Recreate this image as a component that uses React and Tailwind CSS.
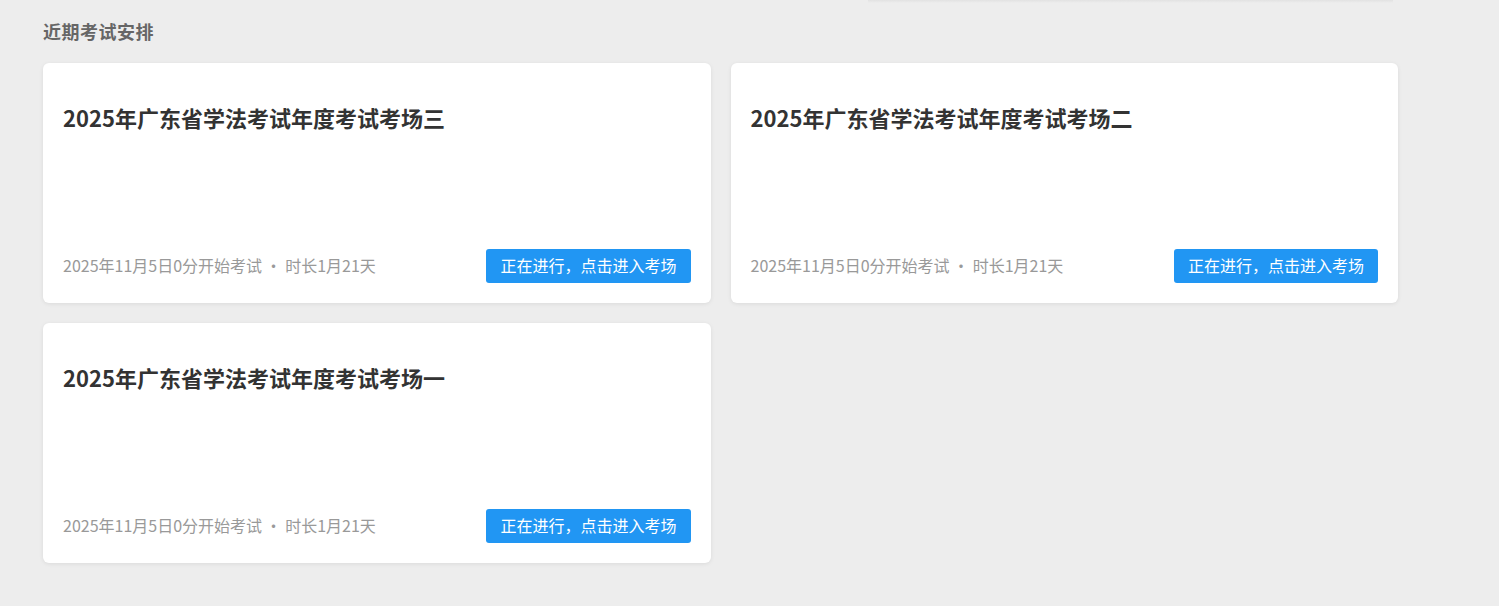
import React from "react";

const exams = [
  { id: 3, title: "2025年广东省学法考试年度考试考场三" },
  { id: 2, title: "2025年广东省学法考试年度考试考场二" },
  { id: 1, title: "2025年广东省学法考试年度考试考场一" },
];

const ExamCard = ({ exam }) => (
  <article className="flex h-[240px] flex-col justify-between rounded-md bg-white px-5 pb-5 pt-[38px] shadow-[0_1px_4px_rgba(0,0,0,0.08)]">
    <h3 className="text-[22px] font-bold leading-[32px] text-[#333]">
      {exam.title}
    </h3>
    <div className="flex items-center justify-between">
      <p className="pb-[3px] text-[16px] text-[#999]">
        2025年11月5日0分开始考试 • 时长1月21天
      </p>
      <button className="h-[34px] rounded-[3px] bg-[#2196f3] px-[14px] pb-[2px] text-[16px] text-white">
        正在进行，点击进入考场
      </button>
    </div>
  </article>
);

const App = () => {
  return (
    <div
      className="min-h-screen bg-[#ededed] px-[43px]"
      style={{ fontFamily: '"Noto Sans CJK SC", "Noto Sans", sans-serif' }}
    >
      {/* leftover shadow of the panel above */}
      <div className="ml-[825px] h-[3px] w-[525px] bg-gradient-to-b from-[#e2e2e2] to-[#ededed]" />

      <section className="w-[1355px] pt-[16px]">
        <h2 className="mb-[20px] text-[18px] font-bold leading-[24px] tracking-[0.5px] text-[#666]">
          近期考试安排
        </h2>

        <div className="grid grid-cols-2 gap-5">
          {exams.map((exam) => (
            <ExamCard key={exam.id} exam={exam} />
          ))}
        </div>
      </section>
    </div>
  );
};

export default App;
